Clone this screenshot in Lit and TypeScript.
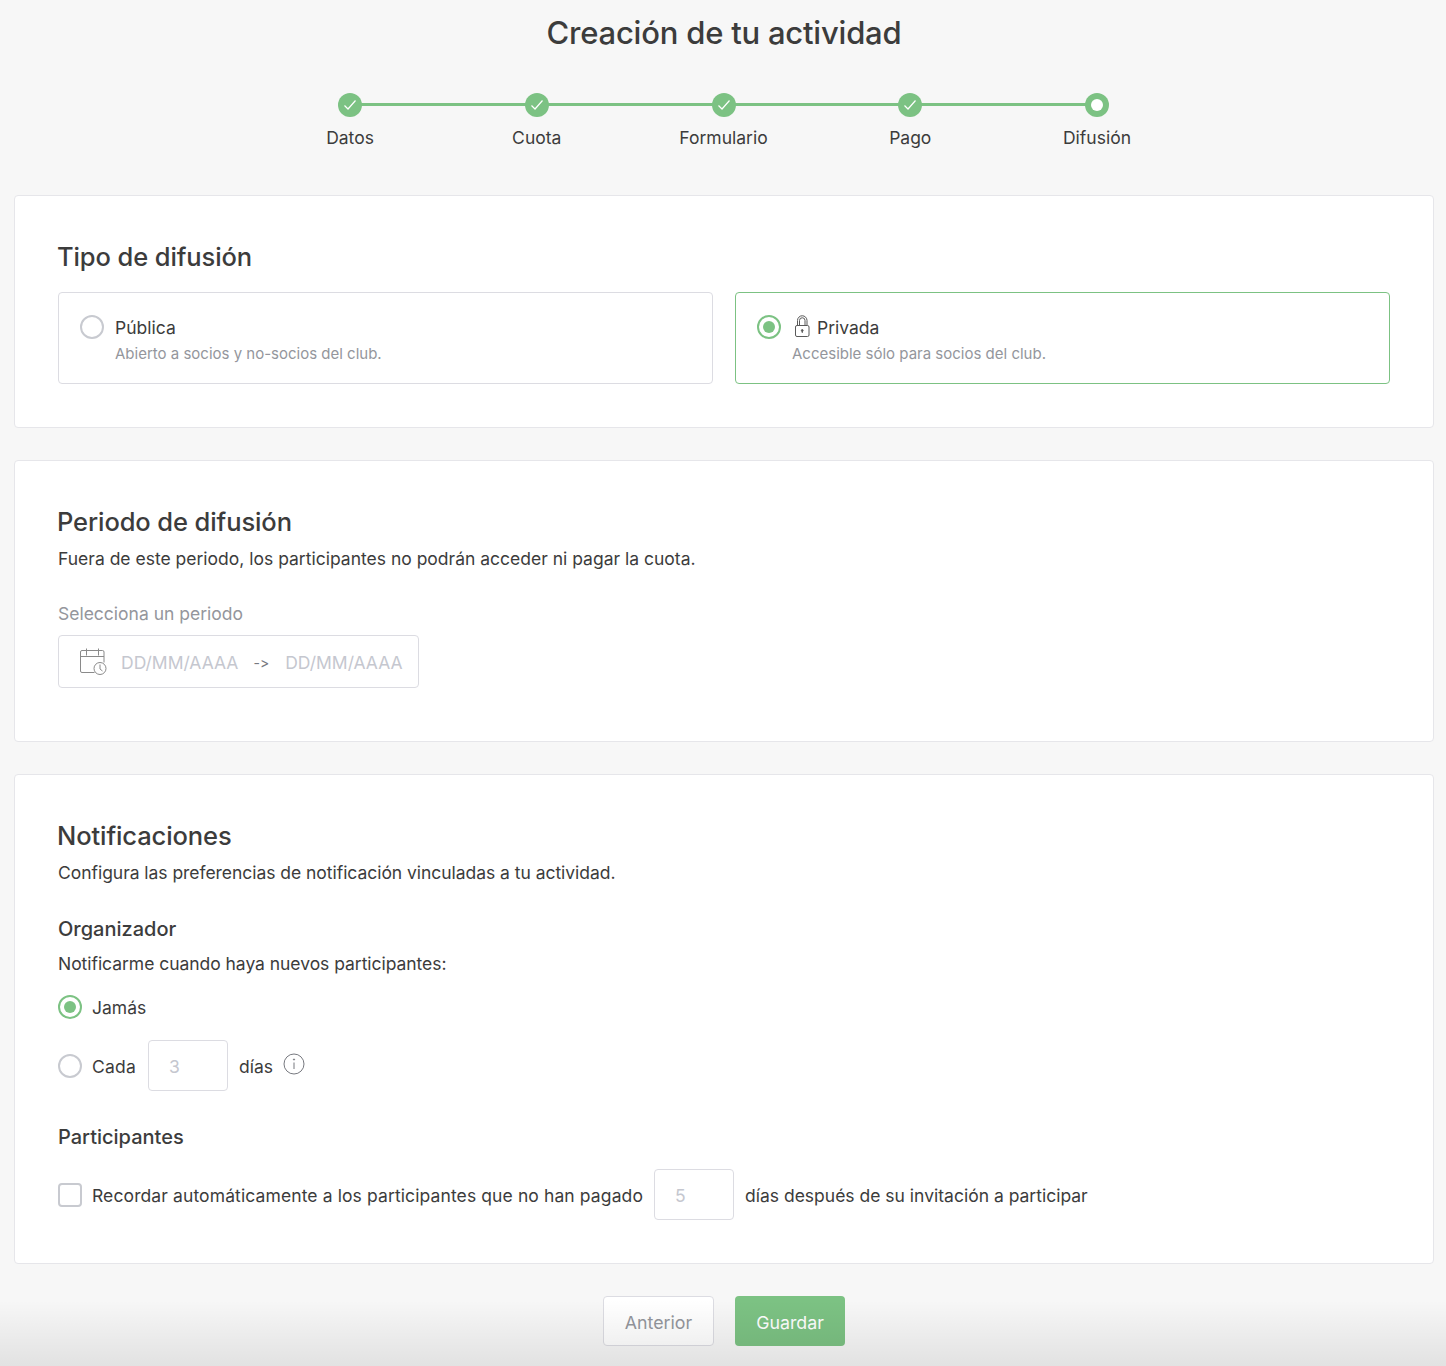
import { LitElement, html, css, svg } from "lit";
import { customElement } from "lit/decorators.js";

const check = svg`<svg width="14" height="12" viewBox="0 0 14 12" fill="none"><path d="M1.5 6.5 L5 10 L12.5 1.5" stroke="#fff" stroke-width="1.2"/></svg>`;

@customElement("app-root")
export class AppRoot extends LitElement {
  static styles = css`
    :host { display: block; font-family: Inter, "Noto Sans", sans-serif; font-variant-ligatures: none; font-feature-settings: "calt" 0; color: #3c3c3c; background: #f7f7f7; height: 1366px; overflow: hidden; position: relative; font-size: 17.5px; line-height: 24px; }
    * { box-sizing: border-box; }
    h1 { margin: 0; padding: 13px 0 0 2px; height: 93px; text-align: center; font-size: 31px; line-height: 40px; font-weight: 500; letter-spacing: -0.22px; }
    .steps { display: grid; grid-template-columns: repeat(5, 186.75px); justify-content: center; height: 102px; padding-left: 1px; }
    .step { position: relative; display: flex; flex-direction: column; align-items: center; }
    .dot { width: 24px; height: 24px; border-radius: 50%; background: #7cc283; display: flex; align-items: center; justify-content: center; position: relative; z-index: 1; margin-bottom: 9px; }
    .dot.cur::after { content: ""; width: 12px; height: 12px; border-radius: 50%; background: #fff; }
    .line { position: absolute; left: 50%; width: 100%; top: 10px; height: 3px; background: #7cc283; }
    .cards { display: flex; flex-direction: column; gap: 32px; padding: 0 12px 0 14px; }
    .card { background: #fff; border: 1px solid #e6e6ea; border-radius: 4px; padding: 44px 43px 0; }
    h2 { margin: 0 0 0 -1px; font-size: 25.5px; line-height: 34px; font-weight: 500; letter-spacing: -0.1px; }
    .c1 { height: 233px; }
    .c2 { height: 282px; }
    .c3 { height: 490px; }
    .opts { display: grid; grid-template-columns: 1fr 1fr; gap: 22px; margin-top: 18px; }
    .opt { height: 92px; border: 1px solid #dcdce2; border-radius: 4px; padding: 21px; display: flex; gap: 11px; }
    .opt.on { border-color: #7cc283; }
    .radio { flex: none; width: 24px; height: 24px; border-radius: 50%; border: 2px solid #c8cad0; display: flex; align-items: center; justify-content: center; }
    .opt .radio { margin-top: 1px; }
    .radio.on { border-color: #7cc283; }
    .radio.on::after { content: ""; width: 12px; height: 12px; border-radius: 50%; background: #7cc283; }
    .opt-title { display: flex; align-items: center; gap: 7px; height: 24px; margin-top: 2px; }
    .opt-sub { font-size: 15px; line-height: 20px; color: #94969c; margin-top: 4px; }
    .lock { margin: -5px 0 0 1px; }
    p { margin: 0; }
    .desc { margin-top: 8px; }
    .narrow { letter-spacing: -0.04px; }
    .lbl { margin-top: 31px; color: #94969c; }
    .range { margin-top: 9px; width: 361px; height: 53px; border: 1px solid #dcdce2; border-radius: 4px; display: flex; align-items: center; padding: 0 0 0 20px; color: #c5c7cf; }
    .range .d1 { margin-left: 14px; }
    .range span { padding-top: 2px; }
    .arrow { color: #77797f; margin: 0 16px 0 15px; font-size: 14px; }
    h3 { margin: 0; font-size: 20px; line-height: 28px; font-weight: 500; }
    .org { margin-top: 30px; }
    .sub { margin-top: 9px; }
    .row { display: flex; align-items: center; gap: 11px; }
    .row > span { padding-top: 2px; }
    .row > .radio + span, .row > .box + span { margin-left: -1px; }
    .r1 { margin-top: 19px; height: 24px; }
    .r2 { margin-top: 21px; height: 51px; }
    .cada { width: 45px; letter-spacing: 0.2px; }
    .num { width: 80px; height: 51px; border: 1px solid #dcdce2; border-radius: 4px; display: flex; align-items: center; padding: 2px 0 0 20px; color: #c5c7cf; }
    .info { margin: -4px 0 0 -1px; }
    .part { margin-top: 32px; }
    .r3 { margin-top: 18px; height: 51px; }
    .tight { letter-spacing: 0.11px; }
    .box { width: 24px; height: 24px; border: 2px solid #c8cad0; border-radius: 4px; flex: none; }
    .foot { display: flex; justify-content: center; gap: 21px; margin-top: 32px; padding-left: 2px; }
    .btn { height: 50px; border-radius: 4px; display: flex; align-items: center; justify-content: center; font-size: 17.8px; padding-top: 3px; }
    .prev { width: 111px; background: #fff; border: 1px solid #dcdce2; color: #94969c; }
    .save { width: 110px; background: #7cc283; color: #fff; }
    .shade { position: absolute; left: 0; right: 0; bottom: 0; height: 66px; pointer-events: none; background: linear-gradient(to bottom, rgba(0,0,0,0), rgba(0,0,0,0.085)); }
  `;

  render() {
    const steps = ["Datos", "Cuota", "Formulario", "Pago", "Difusión"];
    return html`
      <h1>Creación de tu actividad</h1>
      <div class="steps">
        ${steps.map((s, i) => html`<div class="step">
          ${i < 4 ? html`<div class="line"></div>` : ""}
          <div class="dot ${i === 4 ? "cur" : ""}">${i < 4 ? check : ""}</div>
          <span>${s}</span>
        </div>`)}
      </div>
      <div class="cards">
        <section class="card c1">
          <h2>Tipo de difusión</h2>
          <div class="opts">
            <div class="opt">
              <div class="radio"></div>
              <div class="body">
                <div class="opt-title">Pública</div>
                <div class="opt-sub">Abierto a socios y no-socios del club.</div>
              </div>
            </div>
            <div class="opt on">
              <div class="radio on"></div>
              <div class="body">
                <div class="opt-title">
                  <svg class="lock" width="17" height="22" viewBox="0 0 17 22" fill="none" stroke="#5a5a5a" stroke-width="1">
                    <rect x="2.5" y="10.5" width="13.5" height="11" rx="1.5"/>
                    <path d="M4.5 10.5V5.5a4.75 4.75 0 0 1 9.5 0v5M6.5 10.5V5.5a2.75 2.75 0 0 1 5.5 0v5"/>
                    <circle cx="9.25" cy="15.5" r="0.9" fill="#5a5a5a"/><path d="M9.25 16v2"/>
                  </svg>
                  Privada
                </div>
                <div class="opt-sub">Accesible sólo para socios del club.</div>
              </div>
            </div>
          </div>
        </section>
        <section class="card c2">
          <h2>Periodo de difusión</h2>
          <p class="desc">Fuera de este periodo, los participantes no podrán acceder ni pagar la cuota.</p>
          <div class="lbl">Selecciona un periodo</div>
          <div class="range">
            <svg width="28" height="28" viewBox="0 0 28 28" fill="none" stroke="#8a8a8a" stroke-width="1">
              <path d="M15.5 24.5H3A1.5 1.5 0 0 1 1.5 23V4A1.5 1.5 0 0 1 3 2.5h20.5A1.5 1.5 0 0 1 25 4v10.5"/>
              <path d="M1.5 8.5H25M7.5 0.5v7M19.5 0.5v7"/>
              <circle cx="21" cy="20.5" r="6" fill="#fff"/><path d="M21 16.5v4.5l2.5 2"/>
            </svg>
            <span class="d1">DD/MM/AAAA</span><span class="arrow">-&gt;</span><span>DD/MM/AAAA</span>
          </div>
        </section>
        <section class="card c3">
          <h2>Notificaciones</h2>
          <p class="desc narrow">Configura las preferencias de notificación vinculadas a tu actividad.</p>
          <h3 class="org">Organizador</h3>
          <p class="sub narrow">Notificarme cuando haya nuevos participantes:</p>
          <div class="row r1"><div class="radio on"></div><span>Jamás</span></div>
          <div class="row r2">
            <div class="radio"></div><span class="cada">Cada</span>
            <div class="num">3</div><span>días</span>
            <svg class="info" width="22" height="22" viewBox="0 0 22 22" fill="none" stroke="#77797f" stroke-width="1">
              <circle cx="11" cy="11" r="10"/><path d="M11 9.5V16"/><circle cx="11" cy="6.5" r="0.6" fill="#77797f"/>
            </svg>
          </div>
          <h3 class="part">Participantes</h3>
          <div class="row r3">
            <div class="box"></div>
            <span class="tight">Recordar automáticamente a los participantes que no han pagado</span>
            <div class="num">5</div>
            <span>días después de su invitación a participar</span>
          </div>
        </section>
      </div>
      <div class="foot">
        <div class="btn prev">Anterior</div>
        <div class="btn save">Guardar</div>
      </div>
      <div class="shade"></div>
    `;
  }
}
